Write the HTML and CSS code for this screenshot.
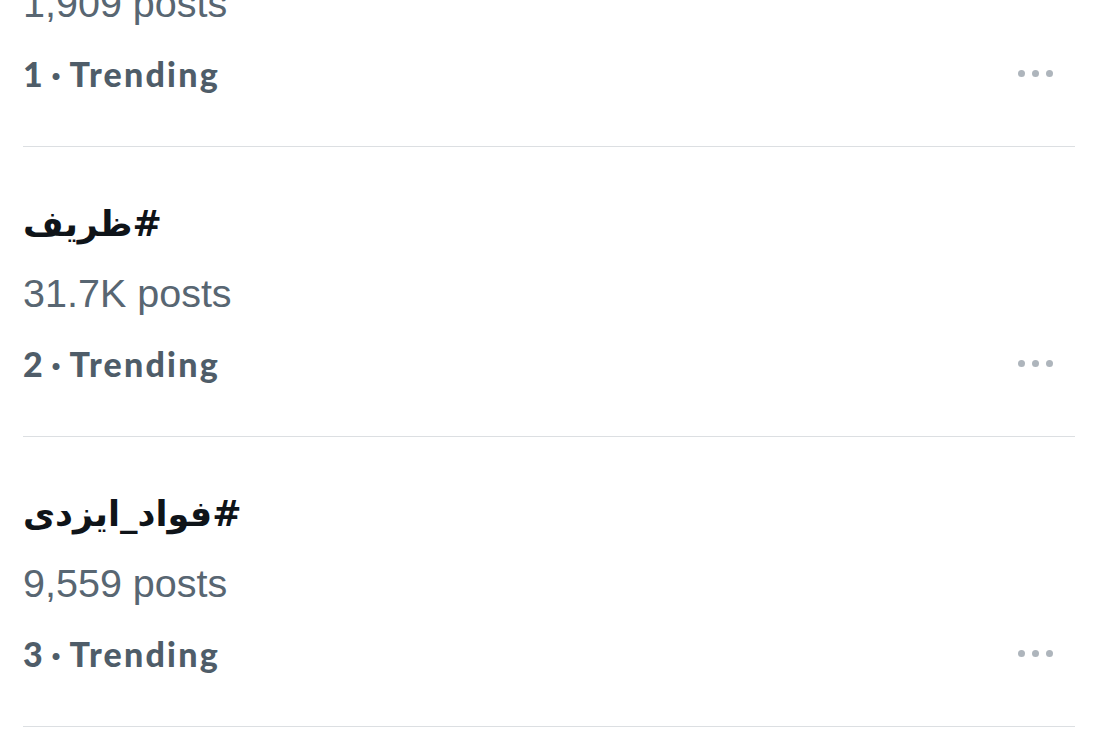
FILE: index.html
```html
<!DOCTYPE html>
<html lang="en">
<head>
  <meta charset="UTF-8">
  <title>Trending</title>
  <link rel="stylesheet" href="styles.css">
</head>
<body>
  <ul class="trendList">
    <li class="trend">
      <div class="trendTitle" dir="auto">#عراق</div>
      <div class="trendCount">1,909 posts</div>
      <div class="trendMeta">
        <span>1&thinsp;·&thinsp;Trending</span>
        <span class="more"><i></i><i></i><i></i></span>
      </div>
    </li>
    <li class="trend">
      <div class="trendTitle" dir="auto">#ظريف</div>
      <div class="trendCount">31.7K posts</div>
      <div class="trendMeta">
        <span>2&thinsp;·&thinsp;Trending</span>
        <span class="more"><i></i><i></i><i></i></span>
      </div>
    </li>
    <li class="trend">
      <div class="trendTitle" dir="auto">#فواد_ایزدی</div>
      <div class="trendCount">9,559 posts</div>
      <div class="trendMeta">
        <span>3&thinsp;·&thinsp;Trending</span>
        <span class="more"><i></i><i></i><i></i></span>
      </div>
    </li>
  </ul>
</body>
</html>
```

FILE: styles.css
```css
body {
  margin: 0;
  background: #ffffff;
  overflow: hidden;
  font-family: "Liberation Sans", Arial, sans-serif;
}

.trendList {
  list-style: none;
  margin: -143px 24px 0 23px;
  padding: 0;
}

/* each trend block, divider under it */
.trend {
  padding: 41px 0 38px;
  border-bottom: 1px solid #dcdfe2;
}

.trendTitle {
  height: 70px;
  line-height: 72px;
  text-align: left;
  font-family: "DejaVu Sans", sans-serif;
  font-weight: bold;
  font-size: 35px;
  color: #0f1419;
}

.trendCount {
  height: 70px;
  line-height: 70px;
  font-size: 39.5px;
  color: #586672;
}

.trendMeta {
  height: 70px;
  display: flex;
  align-items: center;
  justify-content: space-between;
  font-family: Lato, sans-serif;
  font-weight: 900;
  font-size: 34px;
  letter-spacing: 2.2px;
  color: #4f5d69;
}

.more {
  display: flex;
  gap: 7px;
  margin-right: 22px;
}

.more i {
  width: 7px;
  height: 7px;
  border-radius: 50%;
  background: #aeb5bc;
}
```
